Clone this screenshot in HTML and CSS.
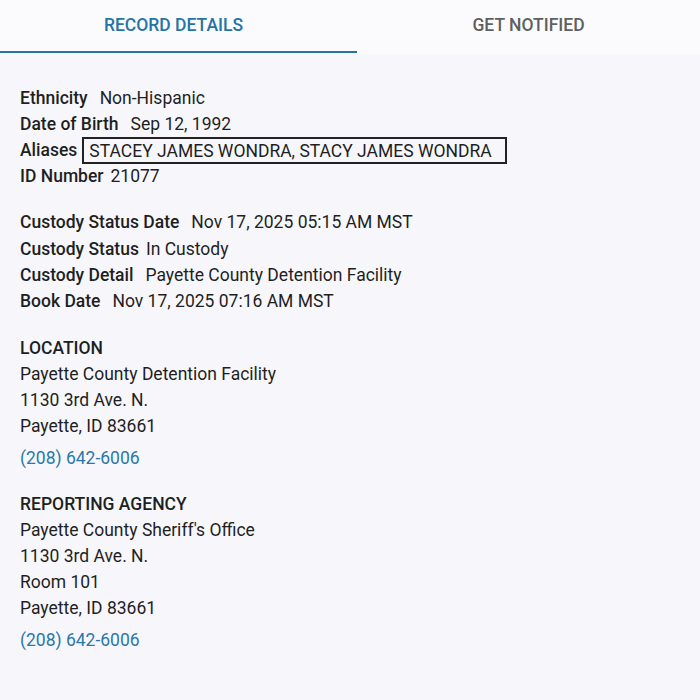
FILE: index.html
```html
<!DOCTYPE html>
<html>
<head>
<meta charset="utf-8">
<link rel="stylesheet" href="styles.css">
</head>
<body>
<div class="tabs">
  <div class="tab active">RECORD DETAILS</div>
  <div class="tab">GET NOTIFIED</div>
</div>
<div class="content">
  <div class="group">
    <div class="row"><span class="label wide">Ethnicity</span><span>Non-Hispanic</span></div>
    <div class="row"><span class="label wide">Date of Birth</span><span>Sep 12, 1992</span></div>
    <div class="row"><span class="label tight">Aliases</span><span class="alias">STACEY JAMES WONDRA, STACY JAMES WONDRA</span></div>
    <div class="row"><span class="label">ID Number</span><span>21077</span></div>
  </div>
  <div class="group custody">
    <div class="row"><span class="label wide">Custody Status Date</span><span>Nov 17, 2025 05:15 AM MST</span></div>
    <div class="row"><span class="label">Custody Status</span><span>In Custody</span></div>
    <div class="row"><span class="label wide">Custody Detail</span><span>Payette County Detention Facility</span></div>
    <div class="row"><span class="label wide">Book Date</span><span>Nov 17, 2025 07:16 AM MST</span></div>
  </div>
  <div class="group">
    <div class="heading">LOCATION</div>
    <div class="line">Payette County Detention Facility</div>
    <div class="line">1130 3rd Ave. N.</div>
    <div class="line">Payette, ID 83661</div>
    <a class="phone">(208) 642-6006</a>
  </div>
  <div class="group">
    <div class="heading">REPORTING AGENCY</div>
    <div class="line">Payette County Sheriff's Office</div>
    <div class="line">1130 3rd Ave. N.</div>
    <div class="line">Room 101</div>
    <div class="line">Payette, ID 83661</div>
    <a class="phone">(208) 642-6006</a>
  </div>
</div>
</body>
</html>
```
FILE: styles.css
```css
html, body {
  margin: 0;
  padding: 0;
  background: #f7f7fb;
  font-family: Roboto, "Liberation Sans", sans-serif;
  color: #1f1f1f;
  font-size: 17.5px;
}
.tabs {
  display: flex;
  height: 54px;
  background: #fbfbfe;
}
.tab {
  flex: 0 0 auto;
  width: 357px;
  display: flex;
  align-items: center;
  justify-content: center;
  padding-bottom: 2px;
  box-sizing: border-box;
  font-weight: 500;
  font-size: 17.5px;
  color: #5f5f5f;
  border-bottom: 2px solid transparent;
  margin-bottom: 1px;
}
.tab + .tab {
  flex: 1 1 auto;
}
.tab.active {
  color: #2674a4;
  border-bottom-color: #2674a4;
  padding-right: 10px;
}
.content {
  padding: 31px 20px 0 20px;
}
.group {
  margin-bottom: 20px;
}
.row {
  display: flex;
  align-items: center;
  height: 26px;
  line-height: 26px;
}
.custody .row {
  height: 26.4px;
}
.label {
  font-weight: 500;
  margin-right: 7px;
}
.label.wide {
  margin-right: 12px;
}
.label.tight {
  margin-right: 5px;
}
.alias {
  border: 2px solid #222;
  height: 27px;
  line-height: 25px;
  box-sizing: border-box;
  padding: 0 13px 0 5px;
}
.heading {
  font-weight: 500;
  line-height: 26px;
}
.line {
  line-height: 26px;
}
.phone {
  display: block;
  color: #2a78a8;
  line-height: 26px;
  margin-top: 6px;
}
```
